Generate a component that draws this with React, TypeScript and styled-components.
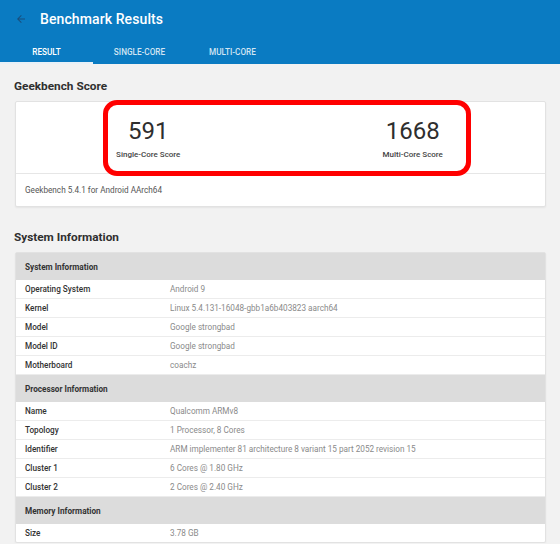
import React from "react";
import styled, { createGlobalStyle } from "styled-components";

const GlobalStyle = createGlobalStyle`
  body {
    margin: 0;
    background: #f2f2f2;
    font-family: Roboto, "Liberation Sans", sans-serif;
  }
`;

const AppBar = styled.div`
  background: #0a7bc2;
  color: #fff;
`;

const Toolbar = styled.div`
  height: 37px;
  display: flex;
  align-items: center;
  padding-left: 15px;
  gap: 13px;
`;

const Title = styled.div`
  font-size: 14px;
  font-weight: 500;
  letter-spacing: 0.1px;
`;

const TabBar = styled.div`
  display: flex;
  height: 27px;
`;

const Tab = styled.div<{ $active?: boolean }>`
  width: 93px;
  display: flex;
  align-items: center;
  justify-content: center;
  font-size: 8.2px;
  font-weight: 500;
  color: ${(p) => (p.$active ? "#fff" : "rgba(255,255,255,0.82)")};
  border-bottom: 2px solid ${(p) => (p.$active ? "#e8f1f8" : "transparent")};
  box-sizing: border-box;
  padding-top: 4px;
`;

const Content = styled.div`
  padding: 0 14px 0 15px;
`;

const SectionTitle = styled.div`
  font-size: 11.8px;
  font-weight: 700;
  color: #2f2f2f;
  margin-left: -1px;
  padding-top: 7px;
  height: 30px;
  display: flex;
  align-items: center;
`;

const Card = styled.div`
  position: relative;
  background: #fff;
  border: 1px solid #e2e2e2;
  border-radius: 2px;
  box-shadow: 0 1px 2px rgba(0, 0, 0, 0.06);
`;

const ScoreRow = styled.div`
  display: grid;
  grid-template-columns: 1fr 1fr;
  height: 71px;
  border-bottom: 1px solid #e6e6e6;
`;

const Score = styled.div`
  display: flex;
  flex-direction: column;
  align-items: center;
  padding-top: 14px;
`;

const ScoreValue = styled.div`
  font-size: 24px;
  color: #2e2e2e;
  line-height: 30px;
`;

const ScoreLabel = styled.div`
  font-size: 8px;
  font-weight: 500;
  color: #444;
  margin-top: 4px;
`;

const CardFooter = styled.div`
  height: 32px;
  display: flex;
  align-items: center;
  padding-left: 9px;
  font-size: 8.2px;
  color: #555;
`;

const Highlight = styled.div`
  position: absolute;
  left: 87px;
  top: -2px;
  width: 368px;
  height: 76px;
  border: 5px solid #f00;
  border-radius: 14px;
  box-sizing: border-box;
  pointer-events: none;
`;

const Gap = styled.div`
  height: 8px;
`;

const GroupHeader = styled.div`
  background: #dcdcdc;
  height: 27px;
  display: flex;
  align-items: center;
  padding-left: 9px;
  font-size: 8.2px;
  font-weight: 700;
  color: #333;
`;

const Row = styled.div`
  display: grid;
  grid-template-columns: 145px 1fr;
  height: 18px;
  align-items: center;
  padding-left: 9px;
  font-size: 8.2px;
  border-bottom: 1px solid #ececec;
  &:last-child {
    border-bottom: none;
  }
`;

const Label = styled.div`
  font-weight: 500;
  color: #333;
`;

const Value = styled.div`
  color: #8a8a8a;
`;

const BackArrow = () => (
  <svg width="12" height="12" viewBox="0 0 24 24">
    <path d="M20 11H7.83l5.59-5.59L12 4l-8 8 8 8 1.41-1.41L7.83 13H20v-2z" fill="#184f7c" />
  </svg>
);

const groups: { title: string; rows: [string, string][] }[] = [
  {
    title: "System Information",
    rows: [
      ["Operating System", "Android 9"],
      ["Kernel", "Linux 5.4.131-16048-gbb1a6b403823 aarch64"],
      ["Model", "Google strongbad"],
      ["Model ID", "Google strongbad"],
      ["Motherboard", "coachz"],
    ],
  },
  {
    title: "Processor Information",
    rows: [
      ["Name", "Qualcomm ARMv8"],
      ["Topology", "1 Processor, 8 Cores"],
      ["Identifier", "ARM implementer 81 architecture 8 variant 15 part 2052 revision 15"],
      ["Cluster 1", "6 Cores @ 1.80 GHz"],
      ["Cluster 2", "2 Cores @ 2.40 GHz"],
    ],
  },
  {
    title: "Memory Information",
    rows: [["Size", "3.78 GB"]],
  },
];

const App = () => {
  return (
    <>
      <GlobalStyle />
      <AppBar>
        <Toolbar>
          <BackArrow />
          <Title>Benchmark Results</Title>
        </Toolbar>
        <TabBar>
          <Tab $active>RESULT</Tab>
          <Tab>SINGLE-CORE</Tab>
          <Tab>MULTI-CORE</Tab>
        </TabBar>
      </AppBar>
      <Content>
        <SectionTitle>Geekbench Score</SectionTitle>
        <Card>
          <ScoreRow>
            <Score>
              <ScoreValue>591</ScoreValue>
              <ScoreLabel>Single-Core Score</ScoreLabel>
            </Score>
            <Score>
              <ScoreValue>1668</ScoreValue>
              <ScoreLabel>Multi-Core Score</ScoreLabel>
            </Score>
          </ScoreRow>
          <CardFooter>Geekbench 5.4.1 for Android AArch64</CardFooter>
          <Highlight />
        </Card>
        <Gap />
        <SectionTitle>System Information</SectionTitle>
        <Card>
          {groups.map((g) => (
            <React.Fragment key={g.title}>
              <GroupHeader>{g.title}</GroupHeader>
              {g.rows.map(([k, v]) => (
                <Row key={k}>
                  <Label>{k}</Label>
                  <Value>{v}</Value>
                </Row>
              ))}
            </React.Fragment>
          ))}
        </Card>
      </Content>
    </>
  );
};

export default App;
